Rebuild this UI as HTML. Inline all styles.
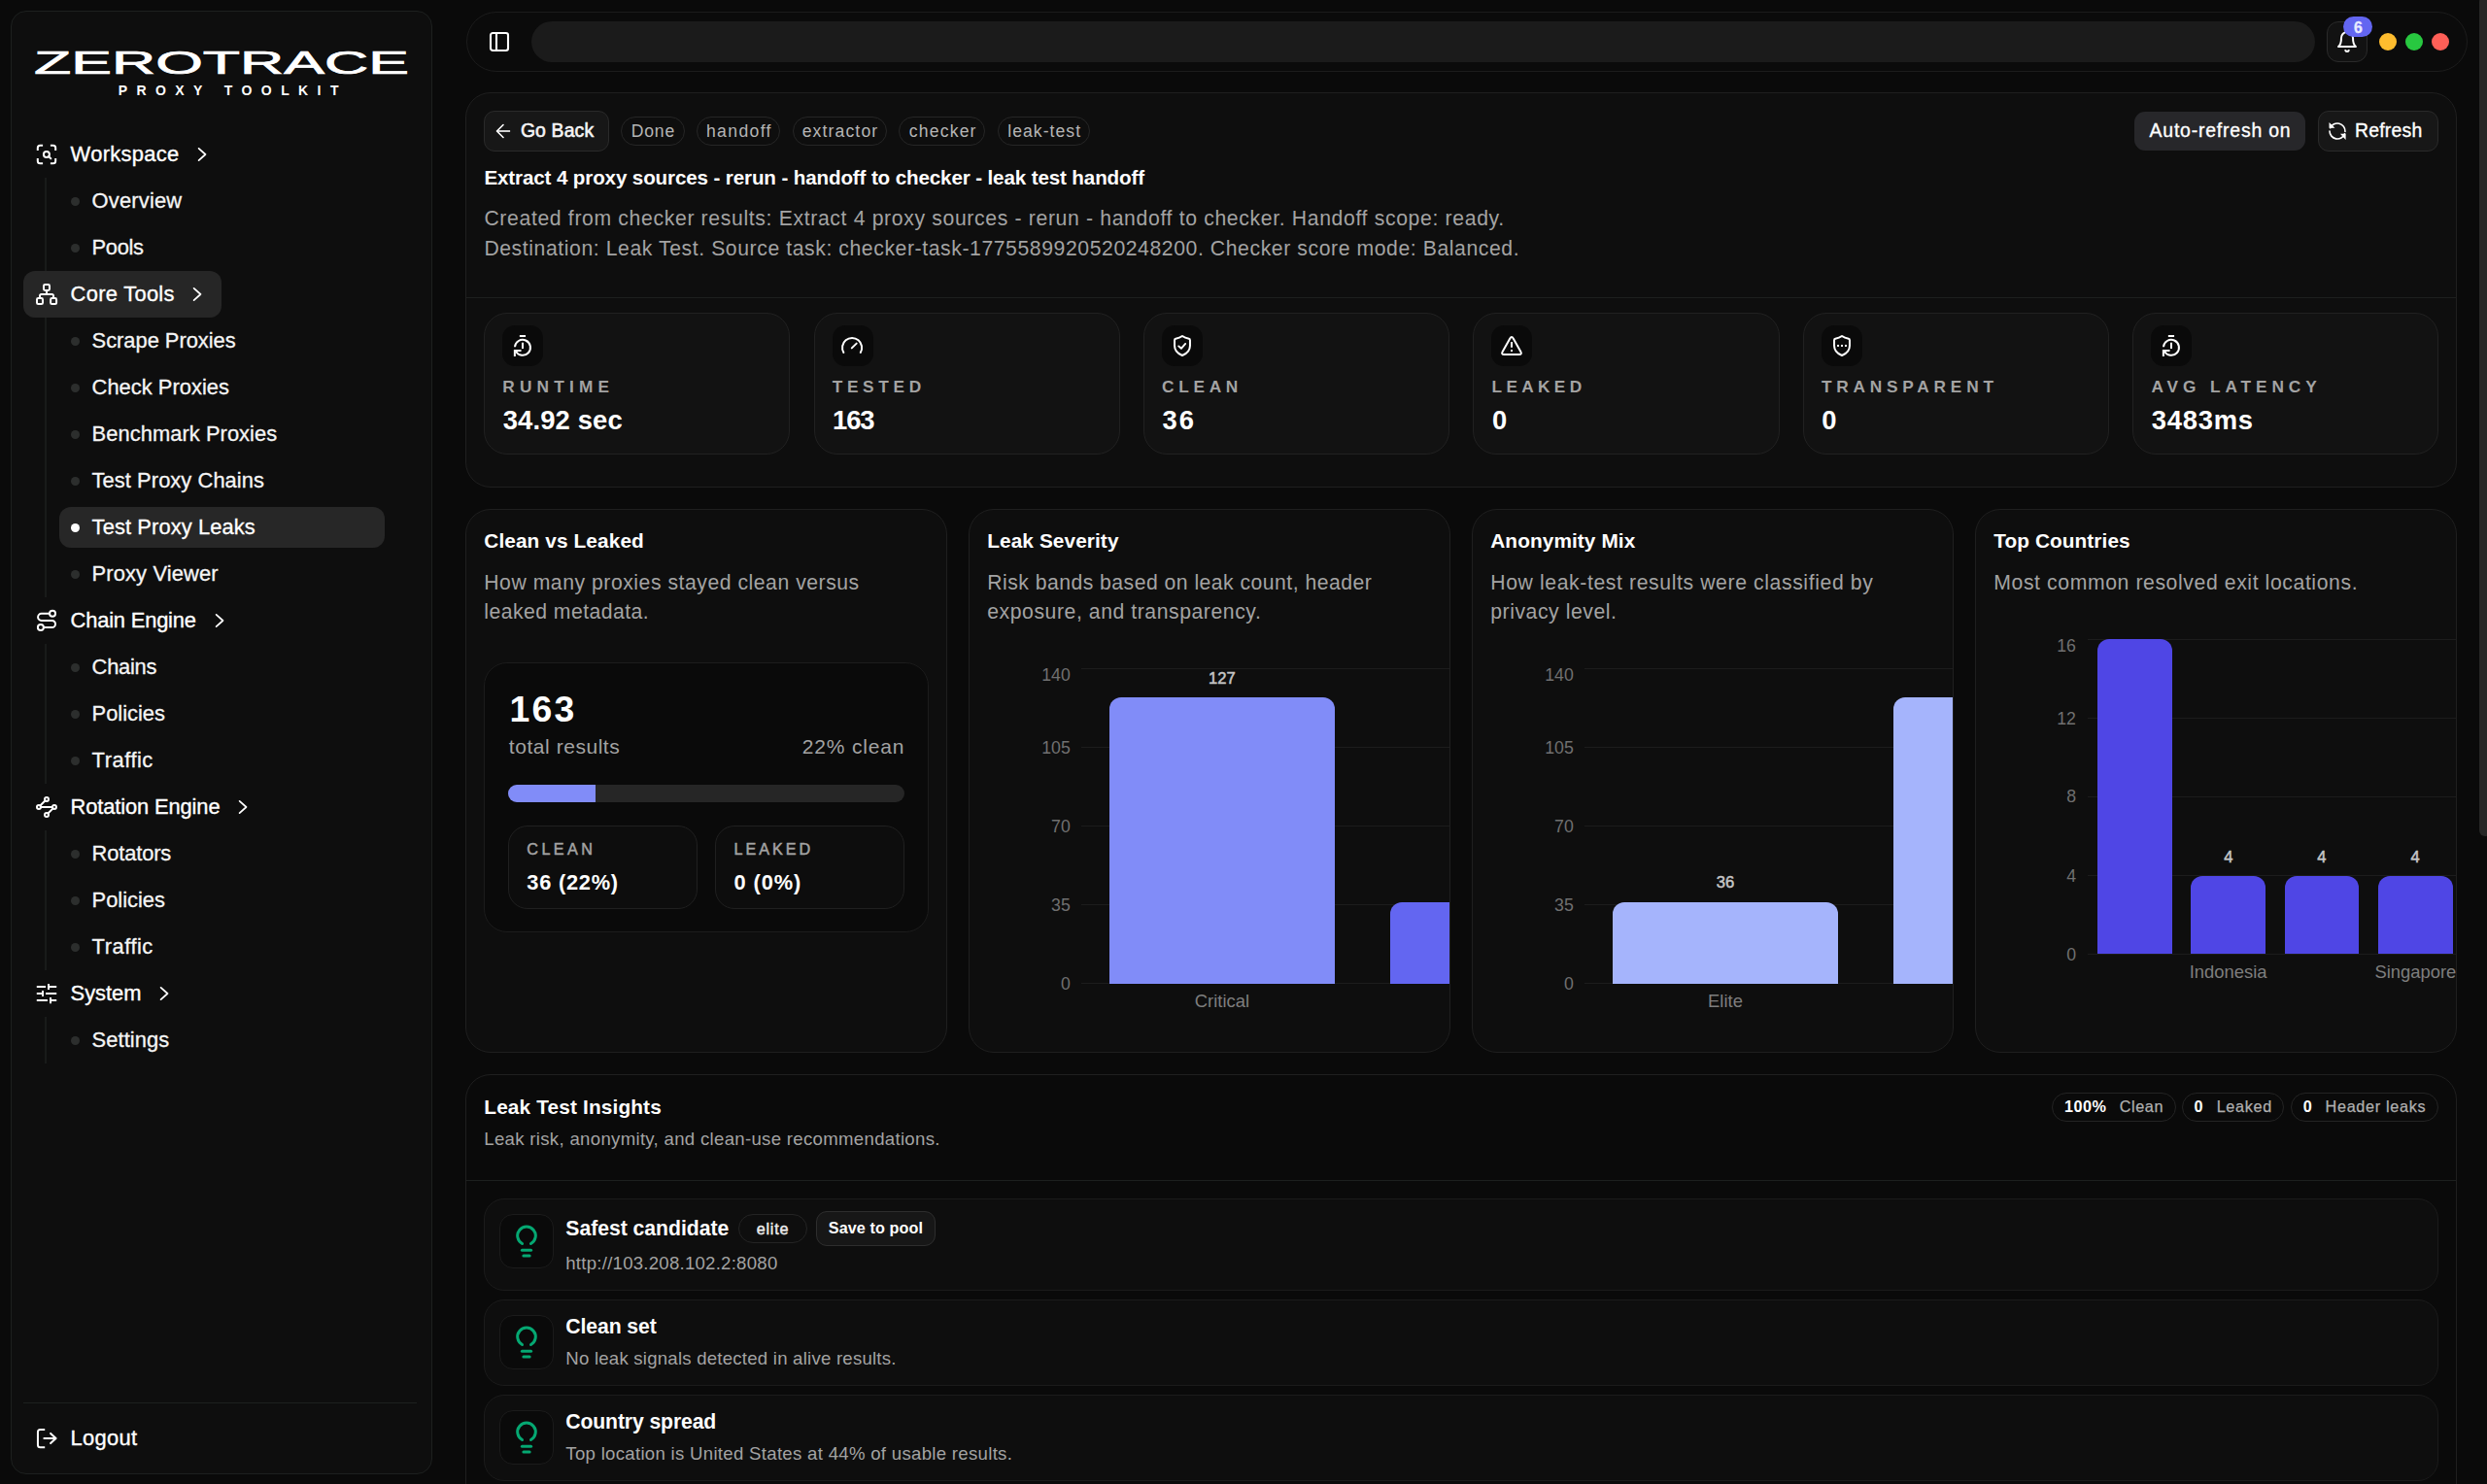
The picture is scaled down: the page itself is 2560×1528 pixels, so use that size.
<!DOCTYPE html>
<html lang="en">
<head>
<meta charset="utf-8">
<title>ZeroTrace Proxy Toolkit - Leak Test</title>
<style>
*{box-sizing:border-box;margin:0;padding:0}
html,body{width:2560px;height:1528px;overflow:hidden;background:#0a0a0a}
body{font-family:"Liberation Sans",sans-serif;color:#fff;-webkit-font-smoothing:antialiased}
.a,.t{position:absolute;display:block}
.t{white-space:pre}
a{text-decoration:none;color:inherit}
button{font:inherit;color:inherit;appearance:none}
</style>
</head>
<body>
 <div class="a" id="app" style="left:0px;top:0px;width:2560px;height:1528px;background:#0a0a0a;overflow:hidden;">
  <aside class="a" style="left:11px;top:11px;width:434px;height:1507px;background:#0e0e0e;border:1px solid #1d201f;border-radius:16px;">
   <div class="a" style="left:24px;top:38px;width:385px;height:50px;">
    <div class="a" style="left:-0.8px;top:-2px;width:388px;height:34px;"><svg width="388" height="34" viewBox="0 0 388 34" style="display:block;overflow:visible"><text x="0" y="27.9" transform="scale(1.8408,1)" font-family="Liberation Sans, sans-serif" font-size="34.0" fill="#fff" stroke="#fff" stroke-width="1.1" style="vector-effect:non-scaling-stroke">ZEROTRACE</text></svg></div>
    <span class="t" style="left:85.8px;top:35.9px;font-size:14px;line-height:1;color:#fff;white-space:pre;font-weight:700;letter-spacing:9.4px;">PROXY TOOLKIT</span>
   </div>
   <nav class="a" style="left:0px;top:118px;width:432px;height:980px;">
    <div class="a" style="left:34px;top:53.1px;width:2px;height:96px;background:#191b1a;"></div>
    <div class="a" style="left:34px;top:197.1px;width:2px;height:288px;background:#191b1a;"></div>
    <div class="a" style="left:34px;top:533.1px;width:2px;height:144px;background:#191b1a;"></div>
    <div class="a" style="left:34px;top:725.1px;width:2px;height:144px;background:#191b1a;"></div>
    <div class="a" style="left:34px;top:917.1px;width:2px;height:48px;background:#191b1a;"></div>
    <div class="a" style="left:12px;top:4.9px;width:300px;height:47.9px;border-radius:12px;">
     <span class="a" style="left:12px;top:12.15px;width:24px;height:24px;"><svg width="24" height="24" viewBox="0 0 24 24" fill="none" stroke="#fff" stroke-width="2" stroke-linecap="round" stroke-linejoin="round" style="display:block;overflow:visible;"><g stroke-linecap="butt"><path d="M2.8 8.1V5.3A2.5 2.5 0 0 1 5.3 2.8H8.1"/><path d="M15.9 2.8h2.8a2.5 2.5 0 0 1 2.5 2.5v2.8"/><path d="M21.2 15.9v2.8a2.5 2.5 0 0 1-2.5 2.5h-2.8"/><path d="M8.1 21.2H5.3a2.5 2.5 0 0 1-2.5-2.5v-2.8"/></g><circle cx="11.9" cy="11.95" r="3"/><path d="M14.1 14.1l2.2 2.1"/></svg></span>
     <span class="t" style="left:48.6px;top:13.2px;font-size:21.9px;line-height:1;color:#fff;white-space:pre;letter-spacing:0.31px;-webkit-text-stroke:0.35px #fff;">Workspace</span>
     <span class="a" style="left:171.7px;top:12.3px;width:24px;height:24px;"><svg width="24" height="24" viewBox="0 0 24 24" fill="none" stroke="#fff" stroke-width="1.7" stroke-linecap="round" stroke-linejoin="round" style="display:block;overflow:visible;"><path d="M8.6 5.8L15.5 12 8.6 18.2"/></svg></span>
    </div>
    <a class="a" style="left:49px;top:56px;width:335px;height:42px;border-radius:12px;">
     <span class="a" style="left:12px;top:17.2px;width:9px;height:9px;background:#2c2e2d;border-radius:4.5px;"></span>
     <span class="t" style="left:33.6px;top:10.2px;font-size:21.9px;line-height:1;color:#f5f5f5;white-space:pre;letter-spacing:0.18px;-webkit-text-stroke:0.3px #f5f5f5;">Overview</span>
    </a>
    <a class="a" style="left:49px;top:104px;width:335px;height:42px;border-radius:12px;">
     <span class="a" style="left:12px;top:17.2px;width:9px;height:9px;background:#2c2e2d;border-radius:4.5px;"></span>
     <span class="t" style="left:33.6px;top:10.2px;font-size:21.9px;line-height:1;color:#f5f5f5;white-space:pre;letter-spacing:-0.34px;-webkit-text-stroke:0.3px #f5f5f5;">Pools</span>
    </a>
    <div class="a" style="left:12px;top:148.9px;width:204px;height:47.9px;background:#262626;border-radius:12px;">
     <span class="a" style="left:12px;top:12.15px;width:24px;height:24px;"><svg width="24" height="24" viewBox="0 0 24 24" fill="none" stroke="#fff" stroke-width="2" stroke-linecap="round" stroke-linejoin="round" style="display:block;overflow:visible;"><rect x="9" y="2" width="6" height="6" rx="1.4"/><rect x="2" y="16.1" width="6" height="6" rx="1.4"/><rect x="16.1" y="16.1" width="6" height="6" rx="1.4"/><path d="M12 8v4"/><path d="M5 16.1V13.6A1.6 1.6 0 0 1 6.6 12h10.8a1.6 1.6 0 0 1 1.6 1.6v2.5"/></svg></span>
     <span class="t" style="left:48.6px;top:13.2px;font-size:21.9px;line-height:1;color:#fff;white-space:pre;letter-spacing:0.29px;-webkit-text-stroke:0.35px #fff;">Core Tools</span>
     <span class="a" style="left:167px;top:12.3px;width:24px;height:24px;"><svg width="24" height="24" viewBox="0 0 24 24" fill="none" stroke="#fff" stroke-width="1.7" stroke-linecap="round" stroke-linejoin="round" style="display:block;overflow:visible;"><path d="M8.6 5.8L15.5 12 8.6 18.2"/></svg></span>
    </div>
    <a class="a" style="left:49px;top:200px;width:335px;height:42px;border-radius:12px;">
     <span class="a" style="left:12px;top:17.2px;width:9px;height:9px;background:#2c2e2d;border-radius:4.5px;"></span>
     <span class="t" style="left:33.6px;top:10.2px;font-size:21.9px;line-height:1;color:#f5f5f5;white-space:pre;letter-spacing:-0.03px;-webkit-text-stroke:0.3px #f5f5f5;">Scrape Proxies</span>
    </a>
    <a class="a" style="left:49px;top:248px;width:335px;height:42px;border-radius:12px;">
     <span class="a" style="left:12px;top:17.2px;width:9px;height:9px;background:#2c2e2d;border-radius:4.5px;"></span>
     <span class="t" style="left:33.6px;top:10.2px;font-size:21.9px;line-height:1;color:#f5f5f5;white-space:pre;letter-spacing:0.02px;-webkit-text-stroke:0.3px #f5f5f5;">Check Proxies</span>
    </a>
    <a class="a" style="left:49px;top:296px;width:335px;height:42px;border-radius:12px;">
     <span class="a" style="left:12px;top:17.2px;width:9px;height:9px;background:#2c2e2d;border-radius:4.5px;"></span>
     <span class="t" style="left:33.6px;top:10.2px;font-size:21.9px;line-height:1;color:#f5f5f5;white-space:pre;letter-spacing:0.05px;-webkit-text-stroke:0.3px #f5f5f5;">Benchmark Proxies</span>
    </a>
    <a class="a" style="left:49px;top:344px;width:335px;height:42px;border-radius:12px;">
     <span class="a" style="left:12px;top:17.2px;width:9px;height:9px;background:#2c2e2d;border-radius:4.5px;"></span>
     <span class="t" style="left:33.6px;top:10.2px;font-size:21.9px;line-height:1;color:#f5f5f5;white-space:pre;letter-spacing:0.06px;-webkit-text-stroke:0.3px #f5f5f5;">Test Proxy Chains</span>
    </a>
    <a class="a" style="left:49px;top:392px;width:335px;height:42px;background:#272727;border-radius:12px;">
     <span class="a" style="left:12px;top:17.2px;width:9px;height:9px;background:#fff;border-radius:4.5px;"></span>
     <span class="t" style="left:33.6px;top:10.2px;font-size:21.9px;line-height:1;color:#fff;white-space:pre;letter-spacing:0.1px;-webkit-text-stroke:0.3px #fff;">Test Proxy Leaks</span>
    </a>
    <a class="a" style="left:49px;top:440px;width:335px;height:42px;border-radius:12px;">
     <span class="a" style="left:12px;top:17.2px;width:9px;height:9px;background:#2c2e2d;border-radius:4.5px;"></span>
     <span class="t" style="left:33.6px;top:10.2px;font-size:21.9px;line-height:1;color:#f5f5f5;white-space:pre;letter-spacing:0.13px;-webkit-text-stroke:0.3px #f5f5f5;">Proxy Viewer</span>
    </a>
    <div class="a" style="left:12px;top:484.9px;width:300px;height:47.9px;border-radius:12px;">
     <span class="a" style="left:12px;top:12.15px;width:24px;height:24px;"><svg width="24" height="24" viewBox="0 0 24 24" fill="none" stroke="#fff" stroke-width="2" stroke-linecap="round" stroke-linejoin="round" style="display:block;overflow:visible;"><circle cx="18.05" cy="4.85" r="3"/><circle cx="5.9" cy="19" r="3"/><path d="M15.05 4.85H6.63a3.55 3.55 0 0 0 0 7.1h10.85a3.55 3.55 0 0 1 0 7.1H8.9"/></svg></span>
     <span class="t" style="left:48.6px;top:13.2px;font-size:21.9px;line-height:1;color:#fff;white-space:pre;letter-spacing:-0.19px;-webkit-text-stroke:0.35px #fff;">Chain Engine</span>
     <span class="a" style="left:189.5px;top:12.3px;width:24px;height:24px;"><svg width="24" height="24" viewBox="0 0 24 24" fill="none" stroke="#fff" stroke-width="1.7" stroke-linecap="round" stroke-linejoin="round" style="display:block;overflow:visible;"><path d="M8.6 5.8L15.5 12 8.6 18.2"/></svg></span>
    </div>
    <a class="a" style="left:49px;top:536px;width:335px;height:42px;border-radius:12px;">
     <span class="a" style="left:12px;top:17.2px;width:9px;height:9px;background:#2c2e2d;border-radius:4.5px;"></span>
     <span class="t" style="left:33.6px;top:10.2px;font-size:21.9px;line-height:1;color:#f5f5f5;white-space:pre;letter-spacing:-0.25px;-webkit-text-stroke:0.3px #f5f5f5;">Chains</span>
    </a>
    <a class="a" style="left:49px;top:584px;width:335px;height:42px;border-radius:12px;">
     <span class="a" style="left:12px;top:17.2px;width:9px;height:9px;background:#2c2e2d;border-radius:4.5px;"></span>
     <span class="t" style="left:33.6px;top:10.2px;font-size:21.9px;line-height:1;color:#f5f5f5;white-space:pre;letter-spacing:-0.01px;-webkit-text-stroke:0.3px #f5f5f5;">Policies</span>
    </a>
    <a class="a" style="left:49px;top:632px;width:335px;height:42px;border-radius:12px;">
     <span class="a" style="left:12px;top:17.2px;width:9px;height:9px;background:#2c2e2d;border-radius:4.5px;"></span>
     <span class="t" style="left:33.6px;top:10.2px;font-size:21.9px;line-height:1;color:#f5f5f5;white-space:pre;letter-spacing:0.52px;-webkit-text-stroke:0.3px #f5f5f5;">Traffic</span>
    </a>
    <div class="a" style="left:12px;top:676.9px;width:300px;height:47.9px;border-radius:12px;">
     <span class="a" style="left:12px;top:12.15px;width:24px;height:24px;"><svg width="24" height="24" viewBox="0 0 24 24" fill="none" stroke="#fff" stroke-width="2" stroke-linecap="round" stroke-linejoin="round" style="display:block;overflow:visible;"><circle cx="12" cy="3.9" r="2"/><circle cx="3.97" cy="11.9" r="2"/><circle cx="19.95" cy="11.9" r="2"/><circle cx="12" cy="19.98" r="2"/><path d="M10.58 5.31L5.39 10.49"/><path d="M5.97 11.9h11.98"/><path d="M18.55 13.33l-5.15 5.22"/></svg></span>
     <span class="t" style="left:48.6px;top:13.2px;font-size:21.9px;line-height:1;color:#fff;white-space:pre;letter-spacing:-0.13px;-webkit-text-stroke:0.35px #fff;">Rotation Engine</span>
     <span class="a" style="left:214.1px;top:12.3px;width:24px;height:24px;"><svg width="24" height="24" viewBox="0 0 24 24" fill="none" stroke="#fff" stroke-width="1.7" stroke-linecap="round" stroke-linejoin="round" style="display:block;overflow:visible;"><path d="M8.6 5.8L15.5 12 8.6 18.2"/></svg></span>
    </div>
    <a class="a" style="left:49px;top:728px;width:335px;height:42px;border-radius:12px;">
     <span class="a" style="left:12px;top:17.2px;width:9px;height:9px;background:#2c2e2d;border-radius:4.5px;"></span>
     <span class="t" style="left:33.6px;top:10.2px;font-size:21.9px;line-height:1;color:#f5f5f5;white-space:pre;letter-spacing:-0.15px;-webkit-text-stroke:0.3px #f5f5f5;">Rotators</span>
    </a>
    <a class="a" style="left:49px;top:776px;width:335px;height:42px;border-radius:12px;">
     <span class="a" style="left:12px;top:17.2px;width:9px;height:9px;background:#2c2e2d;border-radius:4.5px;"></span>
     <span class="t" style="left:33.6px;top:10.2px;font-size:21.9px;line-height:1;color:#f5f5f5;white-space:pre;letter-spacing:-0.01px;-webkit-text-stroke:0.3px #f5f5f5;">Policies</span>
    </a>
    <a class="a" style="left:49px;top:824px;width:335px;height:42px;border-radius:12px;">
     <span class="a" style="left:12px;top:17.2px;width:9px;height:9px;background:#2c2e2d;border-radius:4.5px;"></span>
     <span class="t" style="left:33.6px;top:10.2px;font-size:21.9px;line-height:1;color:#f5f5f5;white-space:pre;letter-spacing:0.52px;-webkit-text-stroke:0.3px #f5f5f5;">Traffic</span>
    </a>
    <div class="a" style="left:12px;top:868.9px;width:300px;height:47.9px;border-radius:12px;">
     <span class="a" style="left:12px;top:12.15px;width:24px;height:24px;"><svg width="24" height="24" viewBox="0 0 24 24" fill="none" stroke="#fff" stroke-width="2" stroke-linecap="round" stroke-linejoin="round" style="display:block;overflow:visible;"><g stroke-linecap="butt"><path d="M1.8 5H11"/><path d="M14 2v6"/><path d="M14 5h8.2"/><path d="M1.8 12H8"/><path d="M8 9v6"/><path d="M11 12h11.2"/><path d="M1.8 19h11.1"/><path d="M16 16v6.2"/><path d="M16 19h6.2"/></g></svg></span>
     <span class="t" style="left:48.6px;top:13.2px;font-size:21.9px;line-height:1;color:#fff;white-space:pre;letter-spacing:-0.04px;-webkit-text-stroke:0.35px #fff;">System</span>
     <span class="a" style="left:132.9px;top:12.3px;width:24px;height:24px;"><svg width="24" height="24" viewBox="0 0 24 24" fill="none" stroke="#fff" stroke-width="1.7" stroke-linecap="round" stroke-linejoin="round" style="display:block;overflow:visible;"><path d="M8.6 5.8L15.5 12 8.6 18.2"/></svg></span>
    </div>
    <a class="a" style="left:49px;top:920px;width:335px;height:42px;border-radius:12px;">
     <span class="a" style="left:12px;top:17.2px;width:9px;height:9px;background:#2c2e2d;border-radius:4.5px;"></span>
     <span class="t" style="left:33.6px;top:10.2px;font-size:21.9px;line-height:1;color:#f5f5f5;white-space:pre;letter-spacing:0.08px;-webkit-text-stroke:0.3px #f5f5f5;">Settings</span>
    </a>
   </nav>
   <div class="a" style="left:12px;top:1432px;width:405px;height:1px;background:#1d201f;"></div>
   <div class="a" style="left:12px;top:1446px;width:405px;height:48px;">
    <span class="a" style="left:12px;top:11px;width:24px;height:24px;"><svg width="24" height="24" viewBox="0 0 24 24" fill="none" stroke="#fff" stroke-width="2" stroke-linecap="round" stroke-linejoin="round" style="display:block;overflow:visible;"><path d="M10.2 2.9H5.45a2.5 2.5 0 0 0-2.5 2.5v13.35a2.5 2.5 0 0 0 2.5 2.5h4.75" stroke-linecap="butt"/><path d="M8.6 12h12.6" stroke-linecap="butt"/><path d="M16.1 6.9l5.5 5.1-5.5 5.1"/></svg></span>
    <span class="t" style="left:48.6px;top:11.7px;font-size:21.9px;line-height:1;color:#fff;white-space:pre;letter-spacing:0.29px;-webkit-text-stroke:0.35px #fff;">Logout</span>
   </div>
  </aside>
  <header class="a" style="left:479.5px;top:12px;width:2060.5px;height:62px;background:#0b0b0b;border:1px solid #1c1c1c;border-radius:31px;">
   <span class="a" style="left:21.5px;top:18px;width:24px;height:24px;"><svg width="24" height="24" viewBox="0 0 24 24" fill="none" stroke="#fff" stroke-width="2.1" stroke-linecap="round" stroke-linejoin="round" style="display:block;overflow:visible;"><rect x="3" y="3" width="18" height="18" rx="2.2"/><path d="M9 3v18"/></svg></span>
   <div class="a" style="left:66.5px;top:9px;width:1836px;height:42px;background:#1b1b1b;border-radius:21px;"></div>
   <button class="a" style="left:1914.5px;top:8.9px;width:42.1px;height:42.1px;background:#121212;border:1px solid #2a2a2a;border-radius:12px;">
    <span class="a" style="left:8.2px;top:8.1px;width:24px;height:24px;"><svg width="24" height="24" viewBox="0 0 24 24" fill="none" stroke="#fff" stroke-width="2" stroke-linecap="round" stroke-linejoin="round" style="display:block;overflow:visible;"><path d="M6 8a6 6 0 0 1 12 0c0 7 3 9 3 9H3s3-2 3-9"/><path d="M10.3 21a1.94 1.94 0 0 0 3.4 0"/></svg></span>
   </button>
   <div class="a" style="left:1931.3px;top:3.8px;width:30.4px;height:21.3px;background:#6366f1;border-radius:11px;">
    <span class="t" style="left:11.1px;top:4px;font-size:15.8px;line-height:1;color:#e8eaff;white-space:pre;font-weight:700;-webkit-text-stroke:0.3px #e8eaff;">6</span>
   </div>
   <span class="a" style="left:1968.2px;top:20.9px;width:18.4px;height:18.4px;background:#febc2e;border-radius:10px;"></span>
   <span class="a" style="left:1995.1px;top:20.9px;width:18.4px;height:18.4px;background:#28c840;border-radius:10px;"></span>
   <span class="a" style="left:2022.2px;top:20.9px;width:18.4px;height:18.4px;background:#ff5f57;border-radius:10px;"></span>
  </header>
  <section class="a" style="left:478.7px;top:94.7px;width:2050.6px;height:407.3px;background:#0e0e0e;border:1px solid #1f1f1f;border-radius:26px;">
   <button class="a" style="left:18.3px;top:18.5px;width:128.7px;height:41.6px;background:#171717;border:1px solid #2a2a2a;border-radius:11px;">
    <span class="a" style="left:7.5px;top:8.3px;width:24px;height:24px;"><svg width="24" height="24" viewBox="0 0 24 24" fill="none" stroke="#fff" stroke-width="1.6" stroke-linecap="round" stroke-linejoin="round" style="display:block;overflow:visible;"><g stroke-linecap="butt"><path d="M19.1 12H5.8"/></g><path d="M12 5.5L5.5 12l6.5 6.5"/></svg></span>
    <span class="t" style="left:36.9px;top:9.4px;font-size:19.4px;line-height:1;color:#f5f5f5;white-space:pre;letter-spacing:0.15px;-webkit-text-stroke:0.6px #f5f5f5;">Go Back</span>
   </button>
   <span class="a" style="left:159.5px;top:24.6px;width:65.6px;height:29.7px;border:1px solid #262626;border-radius:15px;">
    <span class="t" style="left:9.6px;top:6.1px;font-size:17.6px;line-height:1;color:#b5b5b5;white-space:pre;letter-spacing:0.78px;">Done</span>
   </span>
   <span class="a" style="left:237.3px;top:24.6px;width:86.5px;height:29.7px;border:1px solid #262626;border-radius:15px;">
    <span class="t" style="left:9px;top:6.1px;font-size:17.6px;line-height:1;color:#b5b5b5;white-space:pre;letter-spacing:1.35px;">handoff</span>
   </span>
   <span class="a" style="left:336.3px;top:24.6px;width:96.9px;height:29.7px;border:1px solid #262626;border-radius:15px;">
    <span class="t" style="left:8.7px;top:6.1px;font-size:17.6px;line-height:1;color:#b5b5b5;white-space:pre;letter-spacing:1.13px;">extractor</span>
   </span>
   <span class="a" style="left:445.4px;top:24.6px;width:89.4px;height:29.7px;border:1px solid #262626;border-radius:15px;">
    <span class="t" style="left:9.6px;top:6.1px;font-size:17.6px;line-height:1;color:#b5b5b5;white-space:pre;letter-spacing:1.2px;">checker</span>
   </span>
   <span class="a" style="left:547.3px;top:24.6px;width:94.6px;height:29.7px;border:1px solid #262626;border-radius:15px;">
    <span class="t" style="left:9.3px;top:6.1px;font-size:17.6px;line-height:1;color:#b5b5b5;white-space:pre;letter-spacing:1.03px;">leak-test</span>
   </span>
   <h1 class="t" style="left:18.7px;top:77.1px;font-size:20.6px;line-height:1;color:#fff;white-space:pre;font-weight:700;letter-spacing:-0.13px;">Extract 4 proxy sources - rerun - handoff to checker - leak test handoff</h1>
   <p class="t" style="left:18.7px;top:118.5px;font-size:21.2px;line-height:1;color:#a3a3a3;white-space:pre;letter-spacing:0.65px;">Created from checker results: Extract 4 proxy sources - rerun - handoff to checker. Handoff scope: ready.</p>
   <p class="t" style="left:18.7px;top:149.1px;font-size:21.2px;line-height:1;color:#a3a3a3;white-space:pre;letter-spacing:0.58px;">Destination: Leak Test. Source task: checker-task-1775589920520248200. Checker score mode: Balanced.</p>
   <span class="a" style="left:1717.4px;top:19.5px;width:175.9px;height:39.9px;background:#27272a;border-radius:11px;">
    <span class="t" style="left:15.5px;top:10.2px;font-size:19.4px;line-height:1;color:#fff;white-space:pre;letter-spacing:0.81px;-webkit-text-stroke:0.35px #fff;">Auto-refresh on</span>
   </span>
   <button class="a" style="left:1906.2px;top:18.4px;width:124.1px;height:41.8px;background:#171717;border:1px solid #2a2a2a;border-radius:11px;">
    <span class="a" style="left:7.55px;top:8.4px;width:24px;height:24px;"><svg width="24" height="24" viewBox="0 0 24 24" fill="none" stroke="#fff" stroke-width="1.6" stroke-linecap="round" stroke-linejoin="round" style="display:block;overflow:visible;"><path d="M4.68 8.77A8 8 0 0 1 19.99 12.42"/><path d="M4 12A8 8 0 0 0 19.47 14.87"/><path d="M4.1 4.4V8.2H8z" fill="#fff" stroke-width="1.2" stroke-linejoin="miter"/><path d="M16.3 15.3H20V19.4z" fill="#fff" stroke-width="1.2" stroke-linejoin="miter"/></svg></span>
    <span class="t" style="left:37px;top:10.3px;font-size:19.4px;line-height:1;color:#fff;white-space:pre;letter-spacing:0.25px;-webkit-text-stroke:0.35px #fff;">Refresh</span>
   </button>
   <div class="a" style="left:0px;top:210.3px;width:2048.6px;height:1px;background:#1d201f;"></div>
   <article class="a" style="left:18.4px;top:226.3px;width:315.3px;height:146px;background:#121212;border:1px solid #212121;border-radius:24px;">
    <div class="a" style="left:18px;top:12.2px;width:42px;height:42px;background:#0a0a0a;border-radius:13px;">
     <span class="a" style="left:8.9px;top:8.8px;width:24px;height:24px;"><svg width="24" height="24" viewBox="0 0 24 24" fill="none" stroke="#fff" stroke-width="2" stroke-linecap="round" stroke-linejoin="round" style="display:block;overflow:visible;"><g stroke-linecap="butt" stroke-linejoin="miter"><path d="M8.85 2H15.05"/><path d="M12 8.85V15.1"/><path d="M3.98 13.27A8 8 0 1 1 4.9 17.6"/><path d="M10.5 16.93H3.86V23"/></g></svg></span>
    </div>
    <span class="t" style="left:18.2px;top:66.7px;font-size:17.3px;line-height:1;color:#a3a3a3;white-space:pre;font-weight:700;letter-spacing:5.18px;">RUNTIME</span>
    <span class="t" style="left:18.6px;top:96.5px;font-size:27.4px;line-height:1;color:#fff;white-space:pre;font-weight:700;letter-spacing:0.14px;">34.92 sec</span>
   </article>
   <article class="a" style="left:357.82px;top:226.3px;width:315.3px;height:146px;background:#121212;border:1px solid #212121;border-radius:24px;">
    <div class="a" style="left:18px;top:12.2px;width:42px;height:42px;background:#0a0a0a;border-radius:13px;">
     <span class="a" style="left:8.9px;top:8.8px;width:24px;height:24px;"><svg width="24" height="24" viewBox="0 0 24 24" fill="none" stroke="#fff" stroke-width="2" stroke-linecap="round" stroke-linejoin="round" style="display:block;overflow:visible;"><path d="M3.39 19A10.05 10.05 0 1 1 20.77 19"/><path d="M11.8 14.4L16.7 9.65"/></svg></span>
    </div>
    <span class="t" style="left:18.2px;top:66.7px;font-size:17.3px;line-height:1;color:#a3a3a3;white-space:pre;font-weight:700;letter-spacing:4.67px;">TESTED</span>
    <span class="t" style="left:18.6px;top:96.5px;font-size:27.4px;line-height:1;color:#fff;white-space:pre;font-weight:700;letter-spacing:-1.2px;">163</span>
   </article>
   <article class="a" style="left:697.24px;top:226.3px;width:315.3px;height:146px;background:#121212;border:1px solid #212121;border-radius:24px;">
    <div class="a" style="left:18px;top:12.2px;width:42px;height:42px;background:#0a0a0a;border-radius:13px;">
     <span class="a" style="left:8.9px;top:8.8px;width:24px;height:24px;"><svg width="24" height="24" viewBox="0 0 24 24" fill="none" stroke="#fff" stroke-width="2" stroke-linecap="round" stroke-linejoin="round" style="display:block;overflow:visible;"><path d="M12 2.05C10.2 3.4 7.6 4.4 5.2 4.85C4.5 5 4.05 5.5 4.05 6.2V12C4.05 17.5 8.3 20.5 12 22C15.7 20.5 19.95 17.5 19.95 12V6.2C19.95 5.5 19.5 5 18.8 4.85C16.4 4.4 13.8 3.4 12 2.05Z"/><path d="M8.2 12.4L10.9 14.8l4.3-4.9" stroke-width="1.9"/></svg></span>
    </div>
    <span class="t" style="left:18.2px;top:66.7px;font-size:17.3px;line-height:1;color:#a3a3a3;white-space:pre;font-weight:700;letter-spacing:4.67px;">CLEAN</span>
    <span class="t" style="left:18.6px;top:96.5px;font-size:27.4px;line-height:1;color:#fff;white-space:pre;font-weight:700;letter-spacing:1.93px;">36</span>
   </article>
   <article class="a" style="left:1036.66px;top:226.3px;width:315.3px;height:146px;background:#121212;border:1px solid #212121;border-radius:24px;">
    <div class="a" style="left:18px;top:12.2px;width:42px;height:42px;background:#0a0a0a;border-radius:13px;">
     <span class="a" style="left:8.9px;top:8.8px;width:24px;height:24px;"><svg width="24" height="24" viewBox="0 0 24 24" fill="none" stroke="#fff" stroke-width="2" stroke-linecap="round" stroke-linejoin="round" style="display:block;overflow:visible;"><path d="M10.3 4.6Q12 1.6 13.7 4.6L21.3 18Q23 21 19.6 21H4.4Q1 21 2.7 18Z"/><g stroke-linecap="butt"><path d="M12 8v5.7"/><path d="M12 16.1v1.9"/></g></svg></span>
    </div>
    <span class="t" style="left:18.2px;top:66.7px;font-size:17.3px;line-height:1;color:#a3a3a3;white-space:pre;font-weight:700;letter-spacing:4.31px;">LEAKED</span>
    <span class="t" style="left:18.6px;top:96.5px;font-size:27.4px;line-height:1;color:#fff;white-space:pre;font-weight:700;">0</span>
   </article>
   <article class="a" style="left:1376.08px;top:226.3px;width:315.3px;height:146px;background:#121212;border:1px solid #212121;border-radius:24px;">
    <div class="a" style="left:18px;top:12.2px;width:42px;height:42px;background:#0a0a0a;border-radius:13px;">
     <span class="a" style="left:8.9px;top:8.8px;width:24px;height:24px;"><svg width="24" height="24" viewBox="0 0 24 24" fill="none" stroke="#fff" stroke-width="2" stroke-linecap="round" stroke-linejoin="round" style="display:block;overflow:visible;"><path d="M12 2.05C10.2 3.4 7.6 4.4 5.2 4.85C4.5 5 4.05 5.5 4.05 6.2V12C4.05 17.5 8.3 20.5 12 22C15.7 20.5 19.95 17.5 19.95 12V6.2C19.95 5.5 19.5 5 18.8 4.85C16.4 4.4 13.8 3.4 12 2.05Z"/><g stroke="none" fill="#fff"><rect x="7.04" y="10.95" width="2" height="2"/><rect x="11" y="10.95" width="2" height="2"/><rect x="14.99" y="10.95" width="2" height="2"/></g></svg></span>
    </div>
    <span class="t" style="left:18.2px;top:66.7px;font-size:17.3px;line-height:1;color:#a3a3a3;white-space:pre;font-weight:700;letter-spacing:4.77px;">TRANSPARENT</span>
    <span class="t" style="left:18.6px;top:96.5px;font-size:27.4px;line-height:1;color:#fff;white-space:pre;font-weight:700;">0</span>
   </article>
   <article class="a" style="left:1715.5px;top:226.3px;width:315.3px;height:146px;background:#121212;border:1px solid #212121;border-radius:24px;">
    <div class="a" style="left:18px;top:12.2px;width:42px;height:42px;background:#0a0a0a;border-radius:13px;">
     <span class="a" style="left:8.9px;top:8.8px;width:24px;height:24px;"><svg width="24" height="24" viewBox="0 0 24 24" fill="none" stroke="#fff" stroke-width="2" stroke-linecap="round" stroke-linejoin="round" style="display:block;overflow:visible;"><g stroke-linecap="butt" stroke-linejoin="miter"><path d="M8.85 2H15.05"/><path d="M12 8.85V15.1"/><path d="M3.98 13.27A8 8 0 1 1 4.9 17.6"/><path d="M10.5 16.93H3.86V23"/></g></svg></span>
    </div>
    <span class="t" style="left:18.2px;top:66.7px;font-size:17.3px;line-height:1;color:#a3a3a3;white-space:pre;font-weight:700;letter-spacing:4.9px;">AVG LATENCY</span>
    <span class="t" style="left:18.6px;top:96.5px;font-size:27.4px;line-height:1;color:#fff;white-space:pre;font-weight:700;letter-spacing:0.73px;">3483ms</span>
   </article>
  </section>
  <section class="a" style="left:478.67px;top:523.9px;width:496.67px;height:560.2px;background:#0e0e0e;border:1px solid #1f1f1f;border-radius:26px;overflow:hidden;">
   <h2 class="t" style="left:18.6px;top:22.2px;font-size:20.8px;line-height:1;color:#fff;white-space:pre;font-weight:700;letter-spacing:0.11px;">Clean vs Leaked</h2>
   <p class="t" style="left:18.6px;top:64.5px;font-size:21.2px;line-height:1;color:#a3a3a3;white-space:pre;letter-spacing:0.53px;">How many proxies stayed clean versus</p>
   <p class="t" style="left:18.6px;top:94.4px;font-size:21.2px;line-height:1;color:#a3a3a3;white-space:pre;letter-spacing:0.46px;">leaked metadata.</p>
   <div class="a" style="left:18.53px;top:156.9px;width:457.4px;height:278.4px;background:#0a0a0a;border:1px solid #1c1c1c;border-radius:24px;">
    <span class="t" style="left:25.3px;top:29px;font-size:37.4px;line-height:1;color:#fff;white-space:pre;font-weight:700;letter-spacing:2.2px;">163</span>
    <span class="t" style="left:24.7px;top:74.8px;font-size:21px;line-height:1;color:#a3a3a3;white-space:pre;letter-spacing:0.54px;">total results</span>
    <span class="t" style="left:326.7px;top:74.8px;font-size:21px;line-height:1;color:#a3a3a3;white-space:pre;letter-spacing:0.8px;">22% clean</span>
    <div class="a" style="left:23.7px;top:125.4px;width:408.3px;height:18px;background:#262626;border-radius:9px;overflow:hidden;">
     <div class="a" style="left:0px;top:0px;width:90.2px;height:18px;background:#818cf8;"></div>
    </div>
    <div class="a" style="left:24.1px;top:167.6px;width:194.4px;height:85.6px;background:#0d0d0d;border:1px solid #202020;border-radius:20px;">
     <span class="t" style="left:18.1px;top:14.4px;font-size:16.2px;line-height:1;color:#a3a3a3;white-space:pre;letter-spacing:3.4px;-webkit-text-stroke:0.5px #a3a3a3;">CLEAN</span>
     <span class="t" style="left:18.1px;top:46.2px;font-size:21.8px;line-height:1;color:#fff;white-space:pre;font-weight:700;letter-spacing:0.76px;">36 (22%)</span>
    </div>
    <div class="a" style="left:237.2px;top:167.6px;width:194.4px;height:85.6px;background:#0d0d0d;border:1px solid #202020;border-radius:20px;">
     <span class="t" style="left:18.1px;top:14.4px;font-size:16.2px;line-height:1;color:#a3a3a3;white-space:pre;letter-spacing:2.96px;-webkit-text-stroke:0.5px #a3a3a3;">LEAKED</span>
     <span class="t" style="left:18.1px;top:46.2px;font-size:21.8px;line-height:1;color:#fff;white-space:pre;font-weight:700;letter-spacing:0.92px;">0 (0%)</span>
    </div>
   </div>
  </section>
  <section class="a" style="left:996.67px;top:523.9px;width:496.67px;height:560.2px;background:#0e0e0e;border:1px solid #1f1f1f;border-radius:26px;overflow:hidden;">
   <h2 class="t" style="left:18.6px;top:22.2px;font-size:20.8px;line-height:1;color:#fff;white-space:pre;font-weight:700;letter-spacing:0.09px;">Leak Severity</h2>
   <p class="t" style="left:18.6px;top:64.5px;font-size:21.2px;line-height:1;color:#a3a3a3;white-space:pre;letter-spacing:0.47px;">Risk bands based on leak count, header</p>
   <p class="t" style="left:18.6px;top:94.4px;font-size:21.2px;line-height:1;color:#a3a3a3;white-space:pre;letter-spacing:0.56px;">exposure, and transparency.</p>
   <div class="a" style="left:115.53px;top:163.1px;width:386.8px;height:1px;background:#1c1c1c;"></div>
   <span class="t" style="left:74.61px;top:162.2px;font-size:17.7px;line-height:1;color:#707070;white-space:pre;">140</span>
   <div class="a" style="left:115.53px;top:244.2px;width:386.8px;height:1px;background:#1c1c1c;"></div>
   <span class="t" style="left:74.61px;top:237.3px;font-size:17.7px;line-height:1;color:#707070;white-space:pre;">105</span>
   <div class="a" style="left:115.53px;top:325.4px;width:386.8px;height:1px;background:#1c1c1c;"></div>
   <span class="t" style="left:84.44px;top:317.9px;font-size:17.7px;line-height:1;color:#707070;white-space:pre;">70</span>
   <div class="a" style="left:115.53px;top:406.1px;width:386.8px;height:1px;background:#1c1c1c;"></div>
   <span class="t" style="left:84.44px;top:398.7px;font-size:17.7px;line-height:1;color:#707070;white-space:pre;">35</span>
   <div class="a" style="left:115.53px;top:487.2px;width:386.8px;height:1px;background:#1c1c1c;"></div>
   <span class="t" style="left:94.29px;top:479.9px;font-size:17.7px;line-height:1;color:#707070;white-space:pre;">0</span>
   <div class="a" style="left:144.53px;top:193.3px;width:231.4px;height:294.4px;background:#818cf8;border-radius:12px 12px 0 0;"></div>
   <div class="a" style="left:433.23px;top:404.3px;width:231.1px;height:83.4px;background:#6366f1;border-radius:12px 12px 0 0;"></div>
   <span class="t" style="left:246.39px;top:166.3px;font-size:16.6px;line-height:1;color:#c6c6c6;white-space:pre;-webkit-text-stroke:0.5px #c6c6c6;">127</span>
   <span class="t" style="left:232.13px;top:497.5px;font-size:18.4px;line-height:1;color:#7e7e7e;white-space:pre;">Critical</span>
  </section>
  <section class="a" style="left:1514.67px;top:523.9px;width:496.67px;height:560.2px;background:#0e0e0e;border:1px solid #1f1f1f;border-radius:26px;overflow:hidden;">
   <h2 class="t" style="left:18.6px;top:22.2px;font-size:20.8px;line-height:1;color:#fff;white-space:pre;font-weight:700;letter-spacing:0.09px;">Anonymity Mix</h2>
   <p class="t" style="left:18.6px;top:64.5px;font-size:21.2px;line-height:1;color:#a3a3a3;white-space:pre;letter-spacing:0.61px;">How leak-test results were classified by</p>
   <p class="t" style="left:18.6px;top:94.4px;font-size:21.2px;line-height:1;color:#a3a3a3;white-space:pre;letter-spacing:0.55px;">privacy level.</p>
   <div class="a" style="left:115.53px;top:163.1px;width:388.8px;height:1px;background:#1c1c1c;"></div>
   <span class="t" style="left:74.61px;top:162.2px;font-size:17.7px;line-height:1;color:#707070;white-space:pre;">140</span>
   <div class="a" style="left:115.53px;top:244.2px;width:388.8px;height:1px;background:#1c1c1c;"></div>
   <span class="t" style="left:74.61px;top:237.3px;font-size:17.7px;line-height:1;color:#707070;white-space:pre;">105</span>
   <div class="a" style="left:115.53px;top:325.4px;width:388.8px;height:1px;background:#1c1c1c;"></div>
   <span class="t" style="left:84.44px;top:317.9px;font-size:17.7px;line-height:1;color:#707070;white-space:pre;">70</span>
   <div class="a" style="left:115.53px;top:406.1px;width:388.8px;height:1px;background:#1c1c1c;"></div>
   <span class="t" style="left:84.44px;top:398.7px;font-size:17.7px;line-height:1;color:#707070;white-space:pre;">35</span>
   <div class="a" style="left:115.53px;top:487.2px;width:388.8px;height:1px;background:#1c1c1c;"></div>
   <span class="t" style="left:94.29px;top:479.9px;font-size:17.7px;line-height:1;color:#707070;white-space:pre;">0</span>
   <div class="a" style="left:144.53px;top:404.3px;width:231.5px;height:83.4px;background:#a5b4fc;border-radius:12px 12px 0 0;"></div>
   <div class="a" style="left:433.63px;top:193.3px;width:230.7px;height:294.4px;background:#a5b4fc;border-radius:12px 12px 0 0;"></div>
   <span class="t" style="left:251.1px;top:376.3px;font-size:16.6px;line-height:1;color:#c6c6c6;white-space:pre;-webkit-text-stroke:0.5px #c6c6c6;">36</span>
   <span class="t" style="left:242.44px;top:497.5px;font-size:18.4px;line-height:1;color:#7e7e7e;white-space:pre;">Elite</span>
  </section>
  <section class="a" style="left:2032.67px;top:523.9px;width:496.67px;height:560.2px;background:#0e0e0e;border:1px solid #1f1f1f;border-radius:26px;overflow:hidden;">
   <h2 class="t" style="left:18.6px;top:22.2px;font-size:20.8px;line-height:1;color:#fff;white-space:pre;font-weight:700;letter-spacing:0.08px;">Top Countries</h2>
   <p class="t" style="left:18.6px;top:64.5px;font-size:21.2px;line-height:1;color:#a3a3a3;white-space:pre;letter-spacing:0.6px;">Most common resolved exit locations.</p>
   <div class="a" style="left:115.53px;top:132.9px;width:390.8px;height:1px;background:#1c1c1c;"></div>
   <span class="t" style="left:83.64px;top:131.7px;font-size:17.7px;line-height:1;color:#707070;white-space:pre;">16</span>
   <div class="a" style="left:115.53px;top:214px;width:390.8px;height:1px;background:#1c1c1c;"></div>
   <span class="t" style="left:83.64px;top:206.9px;font-size:17.7px;line-height:1;color:#707070;white-space:pre;">12</span>
   <div class="a" style="left:115.53px;top:294.7px;width:390.8px;height:1px;background:#1c1c1c;"></div>
   <span class="t" style="left:93.49px;top:287.4px;font-size:17.7px;line-height:1;color:#707070;white-space:pre;">8</span>
   <div class="a" style="left:115.53px;top:376.3px;width:390.8px;height:1px;background:#1c1c1c;"></div>
   <span class="t" style="left:93.49px;top:369.3px;font-size:17.7px;line-height:1;color:#707070;white-space:pre;">4</span>
   <div class="a" style="left:115.53px;top:457px;width:390.8px;height:1px;background:#1c1c1c;"></div>
   <span class="t" style="left:93.49px;top:450.1px;font-size:17.7px;line-height:1;color:#707070;white-space:pre;">0</span>
   <div class="a" style="left:125.53px;top:133.4px;width:76.8px;height:324.1px;background:#4f46e5;border-radius:12px 12px 0 0;"></div>
   <div class="a" style="left:221.73px;top:376.8px;width:76.8px;height:80.7px;background:#4f46e5;border-radius:12px 12px 0 0;"></div>
   <span class="t" style="left:255.51px;top:349.7px;font-size:16.6px;line-height:1;color:#c6c6c6;white-space:pre;-webkit-text-stroke:0.5px #c6c6c6;">4</span>
   <div class="a" style="left:317.93px;top:376.8px;width:76.8px;height:80.7px;background:#4f46e5;border-radius:12px 12px 0 0;"></div>
   <span class="t" style="left:351.71px;top:349.7px;font-size:16.6px;line-height:1;color:#c6c6c6;white-space:pre;-webkit-text-stroke:0.5px #c6c6c6;">4</span>
   <div class="a" style="left:414.13px;top:376.8px;width:76.8px;height:80.7px;background:#4f46e5;border-radius:12px 12px 0 0;"></div>
   <span class="t" style="left:447.91px;top:349.7px;font-size:16.6px;line-height:1;color:#c6c6c6;white-space:pre;-webkit-text-stroke:0.5px #c6c6c6;">4</span>
   <span class="t" style="left:220.05px;top:467.5px;font-size:18.4px;line-height:1;color:#7e7e7e;white-space:pre;">Indonesia</span>
   <span class="t" style="left:410.8px;top:467.5px;font-size:18.4px;line-height:1;color:#7e7e7e;white-space:pre;">Singapore</span>
  </section>
  <section class="a" style="left:478.7px;top:1106px;width:2050.6px;height:454px;background:#0a0a0a;border:1px solid #1f1f1f;border-radius:26px;">
   <h2 class="t" style="left:18.6px;top:23.3px;font-size:20.8px;line-height:1;color:#fff;white-space:pre;font-weight:700;letter-spacing:0.15px;">Leak Test Insights</h2>
   <p class="t" style="left:18.6px;top:56.5px;font-size:18.6px;line-height:1;color:#a3a3a3;white-space:pre;letter-spacing:0.31px;">Leak risk, anonymity, and clean-use recommendations.</p>
   <span class="a" style="left:1632.5px;top:18.1px;width:127.4px;height:29.7px;background:#0a0a0a;border:1px solid #242424;border-radius:15px;">
    <span class="t" style="left:11.9px;top:4.7px;font-size:16.2px;line-height:1;color:#fff;white-space:pre;font-weight:700;letter-spacing:0.43px;">100%</span>
    <span class="t" style="left:68.5px;top:4.7px;font-size:16.2px;line-height:1;color:#b0b0b0;white-space:pre;letter-spacing:0.6px;-webkit-text-stroke:0.25px #b0b0b0;">Clean</span>
   </span>
   <span class="a" style="left:1766.3px;top:18.1px;width:105.2px;height:29.7px;background:#0a0a0a;border:1px solid #242424;border-radius:15px;">
    <span class="t" style="left:11.6px;top:4.7px;font-size:16.2px;line-height:1;color:#fff;white-space:pre;font-weight:700;">0</span>
    <span class="t" style="left:34.7px;top:4.7px;font-size:16.2px;line-height:1;color:#b0b0b0;white-space:pre;letter-spacing:0.7px;-webkit-text-stroke:0.25px #b0b0b0;">Leaked</span>
   </span>
   <span class="a" style="left:1878.6px;top:18.1px;width:151.5px;height:29.7px;background:#0a0a0a;border:1px solid #242424;border-radius:15px;">
    <span class="t" style="left:11.5px;top:4.7px;font-size:16.2px;line-height:1;color:#fff;white-space:pre;font-weight:700;">0</span>
    <span class="t" style="left:34.3px;top:4.7px;font-size:16.2px;line-height:1;color:#b0b0b0;white-space:pre;letter-spacing:0.69px;-webkit-text-stroke:0.25px #b0b0b0;">Header leaks</span>
   </span>
   <div class="a" style="left:0px;top:108px;width:2048.6px;height:1px;background:#1d201f;"></div>
   <article class="a" style="left:18.3px;top:127px;width:2012px;height:95px;background:#0e0e0e;border:1px solid #1b1b1b;border-radius:21px;">
    <div class="a" style="left:15px;top:15px;width:56px;height:56px;background:#0a0a0a;border:1px solid #1b1b1b;border-radius:14px;">
     <span class="a" style="left:7px;top:6.8px;width:40px;height:40px;"><svg width="40" height="40" viewBox="-20 -20 40 40" fill="none" stroke="#05a872" stroke-width="3" stroke-linecap="round" stroke-linejoin="round" style="display:block;overflow:visible;"><path d="M-4.5 2.5A9.3 9.3 0 1 1 4.5 2.5"/><path d="M-4.6 9.3H4.6"/><path d="M-3.1 15.1H3.1"/></svg></span>
    </div>
    <h3 class="t" style="left:83.3px;top:18.9px;font-size:21.2px;line-height:1;color:#fff;white-space:pre;font-weight:700;letter-spacing:-0.03px;">Safest candidate</h3>
    <p class="t" style="left:83.3px;top:57.1px;font-size:18.6px;line-height:1;color:#a3a3a3;white-space:pre;letter-spacing:0.25px;">http://103.208.102.2:8080</p>
    <span class="a" style="left:261.4px;top:15px;width:70.6px;height:30px;border:1px solid #242424;border-radius:15px;">
     <span class="t" style="left:17.4px;top:5.6px;font-size:16.2px;line-height:1;color:#ededed;white-space:pre;letter-spacing:0.75px;-webkit-text-stroke:0.45px #ededed;">elite</span>
    </span>
    <button class="a" style="left:340.9px;top:12px;width:122.9px;height:36px;background:#171717;border:1px solid #2e2e2e;border-radius:11px;">
     <span class="t" style="left:11.9px;top:7.9px;font-size:16.2px;line-height:1;color:#fff;white-space:pre;font-weight:700;letter-spacing:0.08px;">Save to pool</span>
    </button>
   </article>
   <article class="a" style="left:18.3px;top:231px;width:2012px;height:89px;background:#0e0e0e;border:1px solid #1b1b1b;border-radius:21px;">
    <div class="a" style="left:15px;top:15px;width:56px;height:56px;background:#0a0a0a;border:1px solid #1b1b1b;border-radius:14px;">
     <span class="a" style="left:7px;top:6.8px;width:40px;height:40px;"><svg width="40" height="40" viewBox="-20 -20 40 40" fill="none" stroke="#05a872" stroke-width="3" stroke-linecap="round" stroke-linejoin="round" style="display:block;overflow:visible;"><path d="M-4.5 2.5A9.3 9.3 0 1 1 4.5 2.5"/><path d="M-4.6 9.3H4.6"/><path d="M-3.1 15.1H3.1"/></svg></span>
    </div>
    <h3 class="t" style="left:83.3px;top:16.1px;font-size:21.2px;line-height:1;color:#fff;white-space:pre;font-weight:700;letter-spacing:-0.09px;">Clean set</h3>
    <p class="t" style="left:83.3px;top:51.2px;font-size:18.6px;line-height:1;color:#a3a3a3;white-space:pre;letter-spacing:0.23px;">No leak signals detected in alive results.</p>
   </article>
   <article class="a" style="left:18.3px;top:329px;width:2012px;height:89px;background:#0e0e0e;border:1px solid #1b1b1b;border-radius:21px;">
    <div class="a" style="left:15px;top:15px;width:56px;height:56px;background:#0a0a0a;border:1px solid #1b1b1b;border-radius:14px;">
     <span class="a" style="left:7px;top:6.8px;width:40px;height:40px;"><svg width="40" height="40" viewBox="-20 -20 40 40" fill="none" stroke="#05a872" stroke-width="3" stroke-linecap="round" stroke-linejoin="round" style="display:block;overflow:visible;"><path d="M-4.5 2.5A9.3 9.3 0 1 1 4.5 2.5"/><path d="M-4.6 9.3H4.6"/><path d="M-3.1 15.1H3.1"/></svg></span>
    </div>
    <h3 class="t" style="left:83.3px;top:16.2px;font-size:21.2px;line-height:1;color:#fff;white-space:pre;font-weight:700;letter-spacing:-0.12px;">Country spread</h3>
    <p class="t" style="left:83.3px;top:51.3px;font-size:18.6px;line-height:1;color:#a3a3a3;white-space:pre;letter-spacing:0.3px;">Top location is United States at 44% of usable results.</p>
   </article>
  </section>
  <div class="a" style="left:2552px;top:-4px;width:12px;height:865px;background:#262626;border-radius:6px;"></div>
 </div>
</body>
</html>
